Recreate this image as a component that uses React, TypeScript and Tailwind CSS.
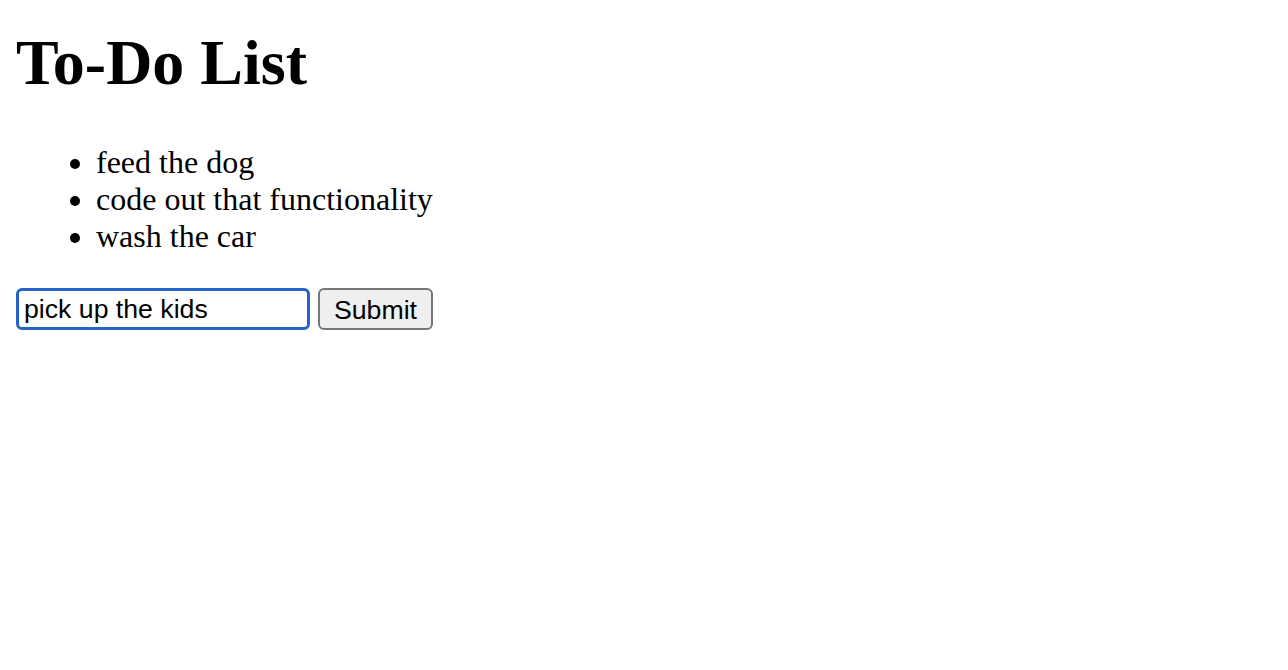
import React, { useState } from "react";

export default function App() {
  const [items, setItems] = useState<string[]>([
    "feed the dog",
    "code out that functionality",
    "wash the car",
  ]);
  const [text, setText] = useState("pick up the kids");

  const onSubmit = (e: React.FormEvent) => {
    e.preventDefault();
    if (!text.trim()) return;
    setItems([...items, text]);
    setText("");
  };

  return (
    <div className="min-h-screen bg-white px-4 text-black font-['Liberation_Serif','Times_New_Roman',serif]">
      <h1 className="pt-[26px] mb-[44px] text-[64px] font-bold leading-[normal]">
        To-Do List
      </h1>

      <ul className="list-disc pl-[80px] mb-[33px] text-[32px] leading-[normal]">
        {items.map((item, i) => (
          <li key={i}>{item}</li>
        ))}
      </ul>

      <form onSubmit={onSubmit} className="flex items-center gap-2">
        <input
          value={text}
          onChange={(e) => setText(e.target.value)}
          className="w-[294px] h-[42px] rounded-[6px] border-[3px] border-[#2563c8] bg-white px-[5px] text-[26.67px] text-black outline-none font-['Liberation_Sans',Arial,sans-serif]"
        />
        <button
          type="submit"
          className="w-[115px] h-[42px] rounded-[6px] border-2 border-[#767676] bg-[#efefef] text-[26.67px] text-black font-['Liberation_Sans',Arial,sans-serif]"
        >
          Submit
        </button>
      </form>
    </div>
  );
}
